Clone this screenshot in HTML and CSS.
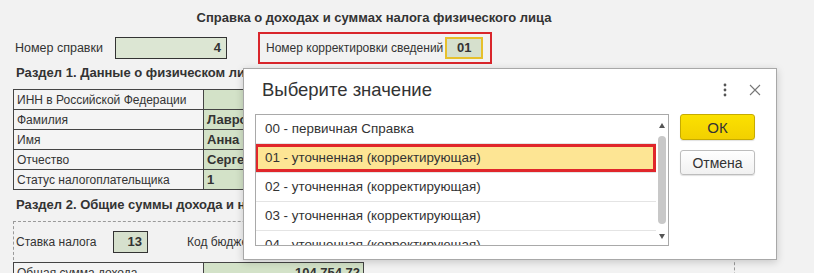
FILE: index.html
```html
<!DOCTYPE html>
<html lang="ru">
<head>
  <meta charset="UTF-8">
  <meta name="viewport" content="width=device-width, initial-scale=1.0">
  <title>Справка о доходах</title>
  <link rel="stylesheet" href="styles.css">
</head>
<body>

<div class="form">
  <h1 class="title">Справка о доходах и суммах налога физического лица</h1>

  <div class="head-row">
    <span class="label label-num">Номер справки</span>
    <span class="field field-num">4</span>
    <div class="corr-box">
      <span class="label">Номер корректировки сведений</span>
      <span class="field field-corr">01</span>
    </div>
  </div>

  <h2 class="section">Раздел 1. Данные о физическом лице - получателе дохода</h2>
  <table class="grid">
    <tr><td class="name">ИНН в Российской Федерации</td><td class="value"></td></tr>
    <tr><td class="name">Фамилия</td><td class="value">Лаврова</td></tr>
    <tr><td class="name">Имя</td><td class="value">Анна</td></tr>
    <tr><td class="name">Отчество</td><td class="value">Сергеевна</td></tr>
    <tr><td class="name">Статус налогоплательщика</td><td class="value">1</td></tr>
  </table>

  <h2 class="section section-2">Раздел 2. Общие суммы дохода и налога по итогам налогового периода</h2>
  <div class="rate-box">
    <div class="rate-row">
      <span class="label label-rate">Ставка налога</span>
      <span class="field field-rate">13</span>
      <span class="label label-kbk">Код бюджетной классификации</span>
    </div>
    <table class="grid totals">
      <tr><td class="name">Общая сумма дохода</td><td class="value num">104 754,72</td></tr>
    </table>
  </div>
</div>

<div class="dialog">
  <div class="dialog-head">
    <span class="dialog-title">Выберите значение</span>
    <svg class="icon-more" width="4" height="14" viewBox="0 0 4 14">
      <circle cx="2" cy="2" r="1.4" fill="#555"/>
      <circle cx="2" cy="7" r="1.4" fill="#555"/>
      <circle cx="2" cy="12" r="1.4" fill="#555"/>
    </svg>
    <svg class="icon-close" width="12" height="12" viewBox="0 0 12 12">
      <path d="M1 1 L11 11 M11 1 L1 11" stroke="#777" stroke-width="1.1" fill="none"/>
    </svg>
  </div>

  <div class="dialog-body">
    <div class="list">
      <div class="list-items">
        <div class="list-item">00 - первичная Справка</div>
        <div class="list-item selected">01 - уточненная (корректирующая)</div>
        <div class="list-item">02 - уточненная (корректирующая)</div>
        <div class="list-item">03 - уточненная (корректирующая)</div>
        <div class="list-item">04 - уточненная (корректирующая)</div>
      </div>
      <div class="scroll">
        <span class="arrow-up"></span>
        <span class="thumb"></span>
        <span class="arrow-down"></span>
      </div>
    </div>

    <div class="buttons">
      <button class="btn btn-ok">ОК</button>
      <button class="btn">Отмена</button>
    </div>
  </div>
</div>

</body>
</html>
```

FILE: styles.css
```css
html, body {
  height: 273px;
  overflow: hidden;
}

body {
  margin: 0;
  background-color: #f2f2f2;
  font-family: "Liberation Sans", Arial, sans-serif;
  font-size: 12px;
  color: #333;
}

.form {
  width: 722px;
  padding: 10px 0 0 13px;
}

.title {
  margin: 0;
  font-size: 13px;
  line-height: 16px;
  text-align: center;
}

.head-row {
  display: flex;
  align-items: center;
  height: 32px;
  margin-top: 6px;
}

.label {
  white-space: nowrap;
}

.label-num {
  width: 100px;
  padding-left: 2px;
  font-size: 12.5px;
}

.field {
  box-sizing: border-box;
  height: 22px;
  line-height: 20px;
  border: 1px solid #333;
  background-color: #dce6d3;
  font-size: 13px;
  font-weight: bold;
  text-align: right;
  padding-right: 5px;
}

.field-num {
  width: 112px;
}

.corr-box {
  box-sizing: border-box;
  display: flex;
  align-items: center;
  gap: 2px;
  height: 32px;
  margin-left: 31px;
  padding: 0 7px 0 6px;
  border: 2px solid #d9262c;
}

.field-corr {
  width: 38px;
  line-height: 18px;
  border: 2px solid #e6c02c;
  background-color: #d6e0cd;
  text-align: center;
  padding: 0;
}

.section {
  margin: 1px 0 8px;
  padding-left: 3px;
  font-size: 13px;
  line-height: 16px;
  white-space: nowrap;
}

.section-2 {
  margin-top: 7px;
}

.grid {
  border-collapse: collapse;
  border: 1px solid #222;
}

.grid tr {
  height: 20px;
}

.grid td {
  padding: 0 3px;
  border: 1px solid #444;
  white-space: nowrap;
}

.grid .name {
  width: 183px;
  background-color: #f4f4f4;
}

.grid .value {
  width: 153px;
  background-color: #d3e2c8;
  font-size: 13px;
  font-weight: bold;
}

.grid .num {
  text-align: right;
}

.rate-box {
  border: 1px dashed #9a9a9a;
  border-bottom: none;
  padding-top: 9px;
  height: 60px;
}

.rate-row {
  display: flex;
  align-items: center;
  height: 22px;
  margin-bottom: 9px;
}

.label-rate {
  width: 97px;
  padding-left: 2px;
}

.field-rate {
  width: 35px;
  background-color: #d6e0cd;
}

.label-kbk {
  margin-left: 39px;
}

.totals {
  margin-left: -1px;
}

/* choice dialog */
.dialog {
  position: absolute;
  left: 243px;
  top: 68px;
  box-sizing: border-box;
  width: 534px;
  height: 192px;
  padding: 9px 20px 0 11px;
  background-color: #fff;
  border: 1px solid #a8a8a8;
  box-shadow: 0 2px 8px rgba(0,0,0,0.18);
}

.dialog-head {
  display: flex;
  align-items: center;
  height: 24px;
  margin-bottom: 12px;
}

.dialog-title {
  flex: 1;
  padding-left: 7px;
  font-size: 18.5px;
  line-height: 24px;
  color: #333;
}

.icon-close {
  margin-left: 22px;
  margin-right: -5px;
}

.dialog-body {
  display: flex;
  align-items: flex-start;
  gap: 11px;
}

.list {
  box-sizing: border-box;
  display: flex;
  width: 414px;
  height: 132px;
  border: 1px solid #a9a9a9;
}

.list-items {
  flex: 1;
  overflow: hidden;
}

.list-item {
  box-sizing: border-box;
  height: 29px;
  line-height: 28px;
  padding-left: 9px;
  border-bottom: 1px solid #e4e4e4;
  font-size: 13.4px;
  white-space: nowrap;
  color: #333;
}

.list-item.selected {
  margin-left: -1px;
  padding-left: 10px;
  background-color: #fde594;
  box-shadow: inset 0 0 0 3px #e0262b;
}

.scroll {
  display: flex;
  flex-direction: column;
  align-items: center;
  width: 12px;
  padding: 8px 0 6px;
  box-sizing: border-box;
}

.arrow-up,
.arrow-down {
  width: 0;
  height: 0;
  border-left: 3.5px solid transparent;
  border-right: 3.5px solid transparent;
}

.arrow-up {
  border-bottom: 5px solid #555;
}

.arrow-down {
  margin-top: auto;
  border-top: 5px solid #555;
}

.thumb {
  width: 8px;
  height: 88px;
  margin-top: 8px;
  border-radius: 4px;
  background-color: #c8c8c8;
}

.buttons {
  display: flex;
  flex-direction: column;
  gap: 10px;
  width: 75px;
}

.btn {
  height: 25px;
  padding: 0;
  border: 1px solid #bdbdbd;
  border-radius: 3px;
  background: linear-gradient(#ffffff, #f1f1f1);
  box-shadow: 0 1px 1px rgba(0,0,0,0.12);
  font-family: "Liberation Sans", Arial, sans-serif;
  font-size: 14px;
  color: #333;
}

.btn-ok {
  height: 26px;
  border-color: #c6ab00;
  background: linear-gradient(#fbe100, #f2d000);
  font-size: 15px;
}
```
